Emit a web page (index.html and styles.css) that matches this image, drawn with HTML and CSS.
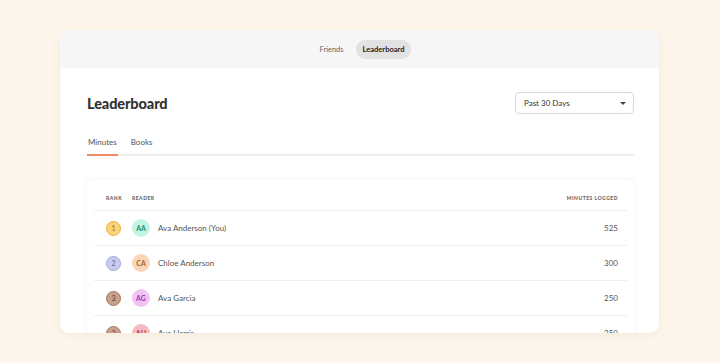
FILE: index.html
```html
<!DOCTYPE html>
<html lang="en">
<head>
  <meta charset="UTF-8">
  <meta name="viewport" content="width=device-width, initial-scale=1.0">
  <title>Leaderboard</title>
  <link rel="stylesheet" href="styles.css">
</head>
<body>
  <div class="panel">
    <div class="top-nav">
      <span class="nav-item">Friends</span>
      <span class="nav-item active">Leaderboard</span>
    </div>

    <div class="content">
      <div class="title-row">
        <h1>Leaderboard</h1>
        <div class="select">
          <span>Past 30 Days</span>
          <span class="caret"></span>
        </div>
      </div>

      <div class="tabs">
        <span class="tab active">Minutes</span>
        <span class="tab">Books</span>
      </div>

      <div class="board">
        <div class="row head">
          <span class="col-rank">Rank</span>
          <span class="col-reader">Reader</span>
          <span class="col-min">Minutes Logged</span>
        </div>
        <div class="row">
          <span class="col-rank"><span class="medal gold">1</span></span>
          <span class="col-reader"><span class="avatar mint">AA</span>Ava Anderson (You)</span>
          <span class="col-min">525</span>
        </div>
        <div class="row">
          <span class="col-rank"><span class="medal silver">2</span></span>
          <span class="col-reader"><span class="avatar peach">CA</span>Chloe Anderson</span>
          <span class="col-min">300</span>
        </div>
        <div class="row">
          <span class="col-rank"><span class="medal bronze">3</span></span>
          <span class="col-reader"><span class="avatar orchid">AG</span>Ava Garcia</span>
          <span class="col-min">250</span>
        </div>
        <div class="row">
          <span class="col-rank"><span class="medal bronze">3</span></span>
          <span class="col-reader"><span class="avatar rose">AH</span>Ava Harris</span>
          <span class="col-min">250</span>
        </div>
      </div>
    </div>
  </div>
</body>
</html>
```

FILE: styles.css
```css
body {
  margin: 0;
  padding: 0;
  background: #fdf6ec;
  font-family: 'Lato', 'Noto Sans', sans-serif;
  color: #444;
  height: 363px;
  overflow: hidden;
}

.panel {
  margin: 30px 0 0 60px;
  width: 599px;
  height: 303px;
  background: #fff;
  border-radius: 9px;
  overflow: hidden;
  box-shadow: 0 2px 10px rgba(180, 150, 110, 0.12);
}

.top-nav {
  height: 38px;
  background: #f6f6f6;
  display: flex;
  align-items: center;
  justify-content: center;
  gap: 4px;
  padding-left: 4px;
  box-sizing: border-box;
}

.nav-item {
  font-size: 7.5px;
  color: #666;
  padding: 5px 8px;
  border-radius: 10px;
}

.nav-item.active {
  background: #e2e2e2;
  color: #222;
  font-weight: 700;
  padding: 5px 7px;
  line-height: 9px;
}

.content {
  padding: 24px 25px 0 27px;
}

.title-row {
  display: flex;
  justify-content: space-between;
  align-items: center;
  height: 22px;
}

h1 {
  margin: 0;
  font-size: 14.5px;
  font-weight: 900;
  color: #333;
  letter-spacing: -0.1px;
}

.select {
  width: 119px;
  height: 22px;
  box-sizing: border-box;
  border: 1px solid #d8d8d8;
  border-radius: 4px;
  display: flex;
  align-items: center;
  justify-content: space-between;
  padding: 0 7px 0 8px;
  font-size: 8px;
  color: #333;
}

.caret {
  width: 0;
  height: 0;
  border-left: 3px solid transparent;
  border-right: 3px solid transparent;
  border-top: 3px solid #444;
}

.tabs {
  margin-top: 22px;
  display: flex;
  gap: 12px;
  border-bottom: 2px solid #eee;
}

.tab {
  font-size: 8px;
  color: #555;
  padding: 1px 1px 7px;
  margin-bottom: -2px;
  border-bottom: 2px solid transparent;
}

.tab.active {
  border-bottom-color: #f08a6a;
}

.board {
  margin-top: 24px;
  border-radius: 6px;
  box-shadow: 0 0 6px rgba(0, 0, 0, 0.06);
  padding: 0 7px;
}

.row {
  display: grid;
  grid-template-columns: 38px 1fr auto;
  align-items: center;
  height: 35px;
  box-sizing: border-box;
  border-bottom: 1px solid #f0f0f0;
  padding: 0 9px 0 12px;
  font-size: 8px;
  color: #555;
}

.row.head {
  height: 31px;
  border-bottom-color: #eee;
  font-size: 5px;
  font-weight: 900;
  letter-spacing: 0.5px;
  text-transform: uppercase;
  color: #666;
  padding-top: 6px;
}

.col-reader {
  display: flex;
  align-items: center;
  gap: 8px;
  margin-left: -12px;
}

.col-min {
  text-align: right;
}

.medal {
  width: 13px;
  height: 13px;
  border-radius: 50%;
  display: flex;
  align-items: center;
  justify-content: center;
  font-size: 7px;
  border: 1px solid;
}

.medal.gold {
  background: #fcd27a;
  border-color: #f3b03a;
  color: #a06a10;
}

.medal.silver {
  background: #c9cbef;
  border-color: #a1a6dc;
  color: #5a5f9c;
}

.medal.bronze {
  background: #c8a18d;
  border-color: #a17a66;
  color: #5e3f30;
}

.avatar {
  width: 18px;
  height: 18px;
  border-radius: 50%;
  display: flex;
  align-items: center;
  justify-content: center;
  font-size: 7px;
  font-weight: 700;
}

.avatar.mint {
  background: #c3f5e2;
  color: #2c8a67;
}

.avatar.peach {
  background: #f8d6b6;
  color: #a0602f;
}

.avatar.orchid {
  background: #f2c3f5;
  color: #a33aa9;
}

.avatar.rose {
  background: #f6bac5;
  color: #c2304b;
}
```
